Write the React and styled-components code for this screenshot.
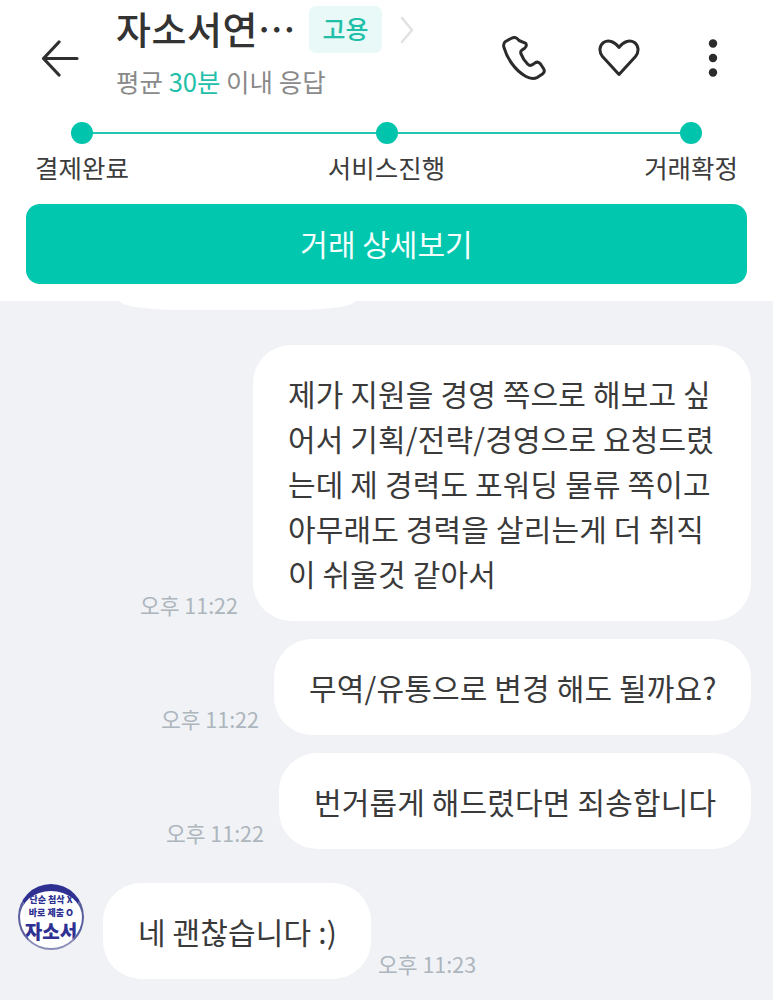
import React from 'react';
import styled, { createGlobalStyle } from 'styled-components';

const GlobalStyle = createGlobalStyle`
    html, body {
        margin: 0;
        padding: 0;
        background: #f0f2f5;
    }
    * {
        box-sizing: border-box;
    }
`;

const Page = styled.div`
    width: 773px;
    height: 1000px;
    overflow: hidden;
    display: flex;
    flex-direction: column;
    background: #f0f2f5;
    font-family: "Noto Sans CJK KR", "Noto Sans", sans-serif;
`;

const Top = styled.div`
    height: 301px;
    background: #fff;
    padding: 0 26px;
    display: flex;
    flex-direction: column;
`;

const Header = styled.div`
    height: 112px;
    display: flex;
    align-items: flex-start;
`;

const BackButton = styled.div`
    width: 90px;
    padding: 39px 0 0 15px;
    color: #2f2f2f;
    line-height: 0;
`;

const TitleBlock = styled.div`
    width: 386px;
    padding-top: 6px;
`;

const TitleRow = styled.div`
    height: 47px;
    display: flex;
    align-items: center;
`;

const Title = styled.div`
    width: 193px;
    margin-top: -3px;
    font-size: 38px;
    font-weight: 500;
    line-height: 44px;
    color: #333;
    white-space: nowrap;
    letter-spacing: 0.5px;
`;

const Tag = styled.div`
    width: 73px;
    height: 47px;
    padding-bottom: 3px;
    border-radius: 7px;
    background: #e8f9f7;
    color: #22bfa8;
    font-size: 25px;
    font-weight: 500;
    display: flex;
    align-items: center;
    justify-content: center;
`;

const Chevron = styled.div`
    margin-left: 18px;
    color: #e2e2e2;
    line-height: 0;
`;

const Sub = styled.div`
    margin-top: 11px;
    font-size: 25.5px;
    line-height: 34px;
    color: #8a8a8a;
    white-space: nowrap;
`;

const Accent = styled.span`
    color: #22bfa8;
`;

const Actions = styled.div`
    flex: 1;
    padding-top: 36px;
    display: flex;
    align-items: center;
    color: #2b2b2b;
    line-height: 0;
`;

const ActionSlot = styled.div`
    margin-left: ${(p) => p.$gap}px;
`;

const Stepper = styled.div`
    display: flex;
    flex-direction: column;
`;

const Track = styled.div`
    height: 22px;
    margin: 10px 45px 0 45px;
    display: flex;
    align-items: center;
`;

const Dot = styled.div`
    width: 22px;
    height: 22px;
    border-radius: 50%;
    background: #00c4ac;
    flex: none;
`;

const Line = styled.div`
    flex: 1;
    height: 2px;
    background: #22c5b0;
`;

const Labels = styled.div`
    margin: 5px 9px 0 9px;
    display: flex;
    justify-content: space-between;
    font-size: 25.5px;
    line-height: 36px;
    color: #3c3c3c;
`;

const DetailButton = styled.div`
    height: 80px;
    margin-top: 19px;
    padding-bottom: 2px;
    border-radius: 14px;
    background: #00c7ae;
    color: #f4fffd;
    font-size: 30px;
    font-weight: 400;
    display: flex;
    align-items: center;
    justify-content: center;
`;

const Chat = styled.div`
    flex: 1;
    padding: 0 22px 0 18px;
    display: flex;
    flex-direction: column;
`;

const Sliver = styled.div`
    width: 235px;
    height: 9px;
    margin-left: 102px;
    background: #fff;
    border-radius: 0 0 60px 60px / 0 0 9px 9px;
`;

const Row = styled.div`
    display: flex;
    align-items: flex-end;
    justify-content: ${(p) => (p.$mine ? 'flex-end' : 'flex-start')};
    margin-top: ${(p) => p.$top}px;
`;

const Time = styled.div`
    font-size: 21.5px;
    line-height: 30px;
    color: #adb5bd;
    white-space: nowrap;
    margin: ${(p) => (p.$mine ? '0 15px 1px 0' : '0 0 0 7px')};
`;

const Bubble = styled.div`
    background: #fff;
    border-radius: 38px;
    padding: 26px 30px 25px 35px;
    width: ${(p) => p.$width}px;
    font-size: 30px;
    line-height: 45px;
    letter-spacing: 0.15px;
    color: #3a3a3a;
    white-space: pre;
`;

const Avatar = styled.div`
    width: 66px;
    height: 66px;
    margin: 0 19px 29px 0;
    padding-top: 2px;
    border-radius: 50%;
    background: #fff;
    border-left: 2px solid #5a5f9e;
    border-right: 2px solid #5a5f9e;
    border-top: 7px solid #2e3192;
    border-bottom: 2px solid #8a8cb8;
    overflow: hidden;
    display: flex;
    flex-direction: column;
    align-items: center;
    color: #2e3192;
    font-weight: 900;
`;

const AvatarLine = styled.div`
    font-size: 9px;
    line-height: 13px;
    white-space: nowrap;
`;

const AvatarLogo = styled.div`
    font-size: 19px;
    line-height: 24px;
`;

const BackIcon = () => (
    <svg width="38" height="38" viewBox="0 0 38 38" fill="none" stroke="currentColor" strokeWidth="3.2" strokeLinecap="round" strokeLinejoin="round">
        <path d="M36 19.5H3M18 3L2.5 19.5 18 36" />
    </svg>
);

const ChevronIcon = () => (
    <svg width="14" height="28" viewBox="0 0 14 28" fill="none" stroke="currentColor" strokeWidth="2.6" strokeLinecap="round" strokeLinejoin="round">
        <path d="M2 2l10 12L2 26" />
    </svg>
);

const PhoneIcon = () => (
    <svg width="44" height="44" viewBox="0 0 44 44" fill="none" stroke="currentColor" strokeWidth="3" strokeLinecap="round" strokeLinejoin="round">
        <path d="M9 2.5L3.5 5.5C1.5 6.8 1.3 9 2 11.5 5 22 12.5 34 24 40.5c4.5 2.5 8 2.5 11.5.8l5-3.3c2-1.6 2.3-3.5 1-5.5l-3-4.5c-1.6-2-3.6-2.4-5.6-1.1l-3 2c-1.5.8-2.8.6-4-.6-3.2-3-5.5-6.7-7-10.7-.5-1.5-.1-2.7 1.2-3.6l2.5-1.7c1.8-1.4 2.2-3 1.2-5L17 4.500C15 1.500 12 .8 9 2.500z" />
    </svg>
);

const HeartIcon = () => (
    <svg width="42" height="38" viewBox="0 0 42 38" fill="none" stroke="currentColor" strokeWidth="3" strokeLinejoin="round">
        <path d="M21 35.500L4.500 17.500C.5 12.500 1.500 6.500 5.500 3.500c4.500-3 11-1.500 15.500 5 4.500-6.500 11-8 15.500-5 4 3 5 9 1 14z" />
    </svg>
);

const MoreIcon = () => (
    <svg width="10" height="38" viewBox="0 0 10 38" fill="currentColor">
        <circle cx="5" cy="4.500" r="4.200" />
        <circle cx="5" cy="19" r="4.200" />
        <circle cx="5" cy="33.500" r="4.200" />
    </svg>
);

const App = () => (
    <Page>
        <GlobalStyle />
        <Top>
            <Header>
                <BackButton><BackIcon /></BackButton>
                <TitleBlock>
                    <TitleRow>
                        <Title>자소서연…</Title>
                        <Tag>고용</Tag>
                        <Chevron><ChevronIcon /></Chevron>
                    </TitleRow>
                    <Sub>평균 <Accent>30분</Accent> 이내 응답</Sub>
                </TitleBlock>
                <Actions>
                    <ActionSlot $gap={0}><PhoneIcon /></ActionSlot>
                    <ActionSlot $gap={52}><HeartIcon /></ActionSlot>
                    <ActionSlot $gap={68}><MoreIcon /></ActionSlot>
                </Actions>
            </Header>
            <Stepper>
                <Track>
                    <Dot />
                    <Line />
                    <Dot />
                    <Line />
                    <Dot />
                </Track>
                <Labels>
                    <span>결제완료</span>
                    <span>서비스진행</span>
                    <span>거래확정</span>
                </Labels>
            </Stepper>
            <DetailButton>거래 상세보기</DetailButton>
        </Top>
        <Chat>
            <Sliver />
            <Row $mine $top={35}>
                <Time $mine>오후 11:22</Time>
                <Bubble $width={498}>{'제가 지원을 경영 쪽으로 해보고 싶\n어서 기획/전략/경영으로 요청드렸\n는데 제 경력도 포워딩 물류 쪽이고\n아무래도 경력을 살리는게 더 취직\n이 쉬울것 같아서'}</Bubble>
            </Row>
            <Row $mine $top={18}>
                <Time $mine>오후 11:22</Time>
                <Bubble $width={477}>무역/유통으로 변경 해도 될까요?</Bubble>
            </Row>
            <Row $mine $top={18}>
                <Time $mine>오후 11:22</Time>
                <Bubble $width={472}>번거롭게 해드렸다면 죄송합니다</Bubble>
            </Row>
            <Row $top={34}>
                <Avatar>
                    <AvatarLine>단순 첨삭 X</AvatarLine>
                    <AvatarLine>바로 제출 O</AvatarLine>
                    <AvatarLogo>자소서</AvatarLogo>
                </Avatar>
                <Bubble $width={268}>네 괜찮습니다 :)</Bubble>
                <Time>오후 11:23</Time>
            </Row>
        </Chat>
    </Page>
);

export default App;
